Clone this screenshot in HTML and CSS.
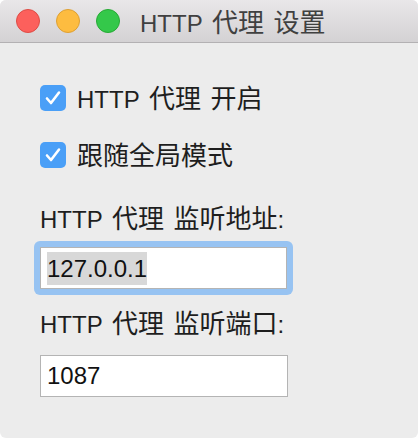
FILE: index.html
```html
<!DOCTYPE html>
<html lang="zh">
<head>
<meta charset="utf-8">
<title>HTTP 代理 设置</title>
<link rel="stylesheet" href="styles.css">
</head>
<body>
<div class="window">
  <div class="titlebar">
    <div class="lights">
      <span class="light red"></span>
      <span class="light yellow"></span>
      <span class="light green"></span>
    </div>
    <div class="title">HTTP <span class="zh">代理</span> <span class="zh">设置</span></div>
  </div>
  <div class="content">
    <label class="check">
      <span class="box"><svg viewBox="0 0 26 26" width="26" height="26"><path d="M7 13.5 L11 18 L19 7.5" fill="none" stroke="#fff" stroke-width="2.6" stroke-linecap="round" stroke-linejoin="round"/></svg></span>
      <span class="check-text">HTTP <span class="zh">代理</span> <span class="zh">开启</span></span>
    </label>
    <label class="check second">
      <span class="box"><svg viewBox="0 0 26 26" width="26" height="26"><path d="M7 13.5 L11 18 L19 7.5" fill="none" stroke="#fff" stroke-width="2.6" stroke-linecap="round" stroke-linejoin="round"/></svg></span>
      <span class="check-text"><span class="zh">跟随全局模式</span></span>
    </label>
    <div class="field-label first-label">HTTP <span class="zh">代理</span> <span class="zh">监听地址</span>:</div>
    <div class="focus-ring">
      <div class="input"><span class="selected">127.0.0.1</span></div>
    </div>
    <div class="field-label second-label">HTTP <span class="zh">代理</span> <span class="zh">监听端口</span>:</div>
    <div class="input plain">1087</div>
  </div>
</div>
</body>
</html>
```
FILE: styles.css
```css
html, body {
  margin: 0;
  padding: 0;
  background: #ffffff;
}
.window {
  width: 418px;
  height: 438px;
  border-radius: 6px;
  overflow: hidden;
  background: #ececec;
  font-family: "Liberation Sans", "Noto Sans CJK SC", sans-serif;
  font-size: 24px;
  color: #1e1e1e;
  word-spacing: 3px;
}
.zh {
  font-family: "Noto Sans CJK SC", sans-serif;
  font-size: 26px;
  line-height: 1;
  word-spacing: 0;
}
.titlebar {
  height: 42px;
  background: linear-gradient(#e9e7e9, #d4d2d4);
  border-bottom: 1px solid #b3b1b3;
  display: flex;
  align-items: center;
  padding-left: 16px;
}
.lights {
  display: flex;
  gap: 16px;
}
.light {
  width: 22px;
  height: 22px;
  border-radius: 50%;
  border: 1px solid;
}
.red { background: #fc605c; border-color: #de4c45; }
.yellow { background: #fdbc40; border-color: #dea033; }
.green { background: #34c84a; border-color: #27aa35; }
.title {
  margin-left: 20px;
  color: #404040;
  height: 24px;
  line-height: 24px;
  margin-bottom: 2px;
}
.content {
  padding: 41px 0 0 40px;
  display: flex;
  flex-direction: column;
  align-items: flex-start;
}
.check {
  display: flex;
  align-items: center;
  gap: 11px;
  height: 27px;
}
.check.second {
  margin-top: 30px;
}
.box {
  width: 26px;
  height: 26px;
  border-radius: 5px;
  background: #4a9ff7;
  display: flex;
}
.check-text {
  height: 24px;
  line-height: 24px;
  margin-bottom: 3px;
}
.field-label {
  height: 24px;
  line-height: 24px;
}
.first-label {
  margin-top: 36px;
}
.second-label {
  margin-top: 14px;
}
.focus-ring {
  margin-top: 13px;
  margin-left: -6px;
  padding: 6px;
  border-radius: 6px;
  background: #97c3f2;
}
.input {
  width: 245px;
  height: 40px;
  background: #ffffff;
  border: 1px solid #b4b4b4;
  display: flex;
  align-items: center;
  padding-left: 6px;
  box-sizing: content-box;
  color: #111;
  line-height: 1;
}
.focus-ring .input {
  width: 239px;
  padding-left: 6px;
}
.selected {
  background: #d8d8d8;
  padding: 5px 0 4px 0;
}
.plain {
  margin-top: 22px;
  width: 240px;
}
```
